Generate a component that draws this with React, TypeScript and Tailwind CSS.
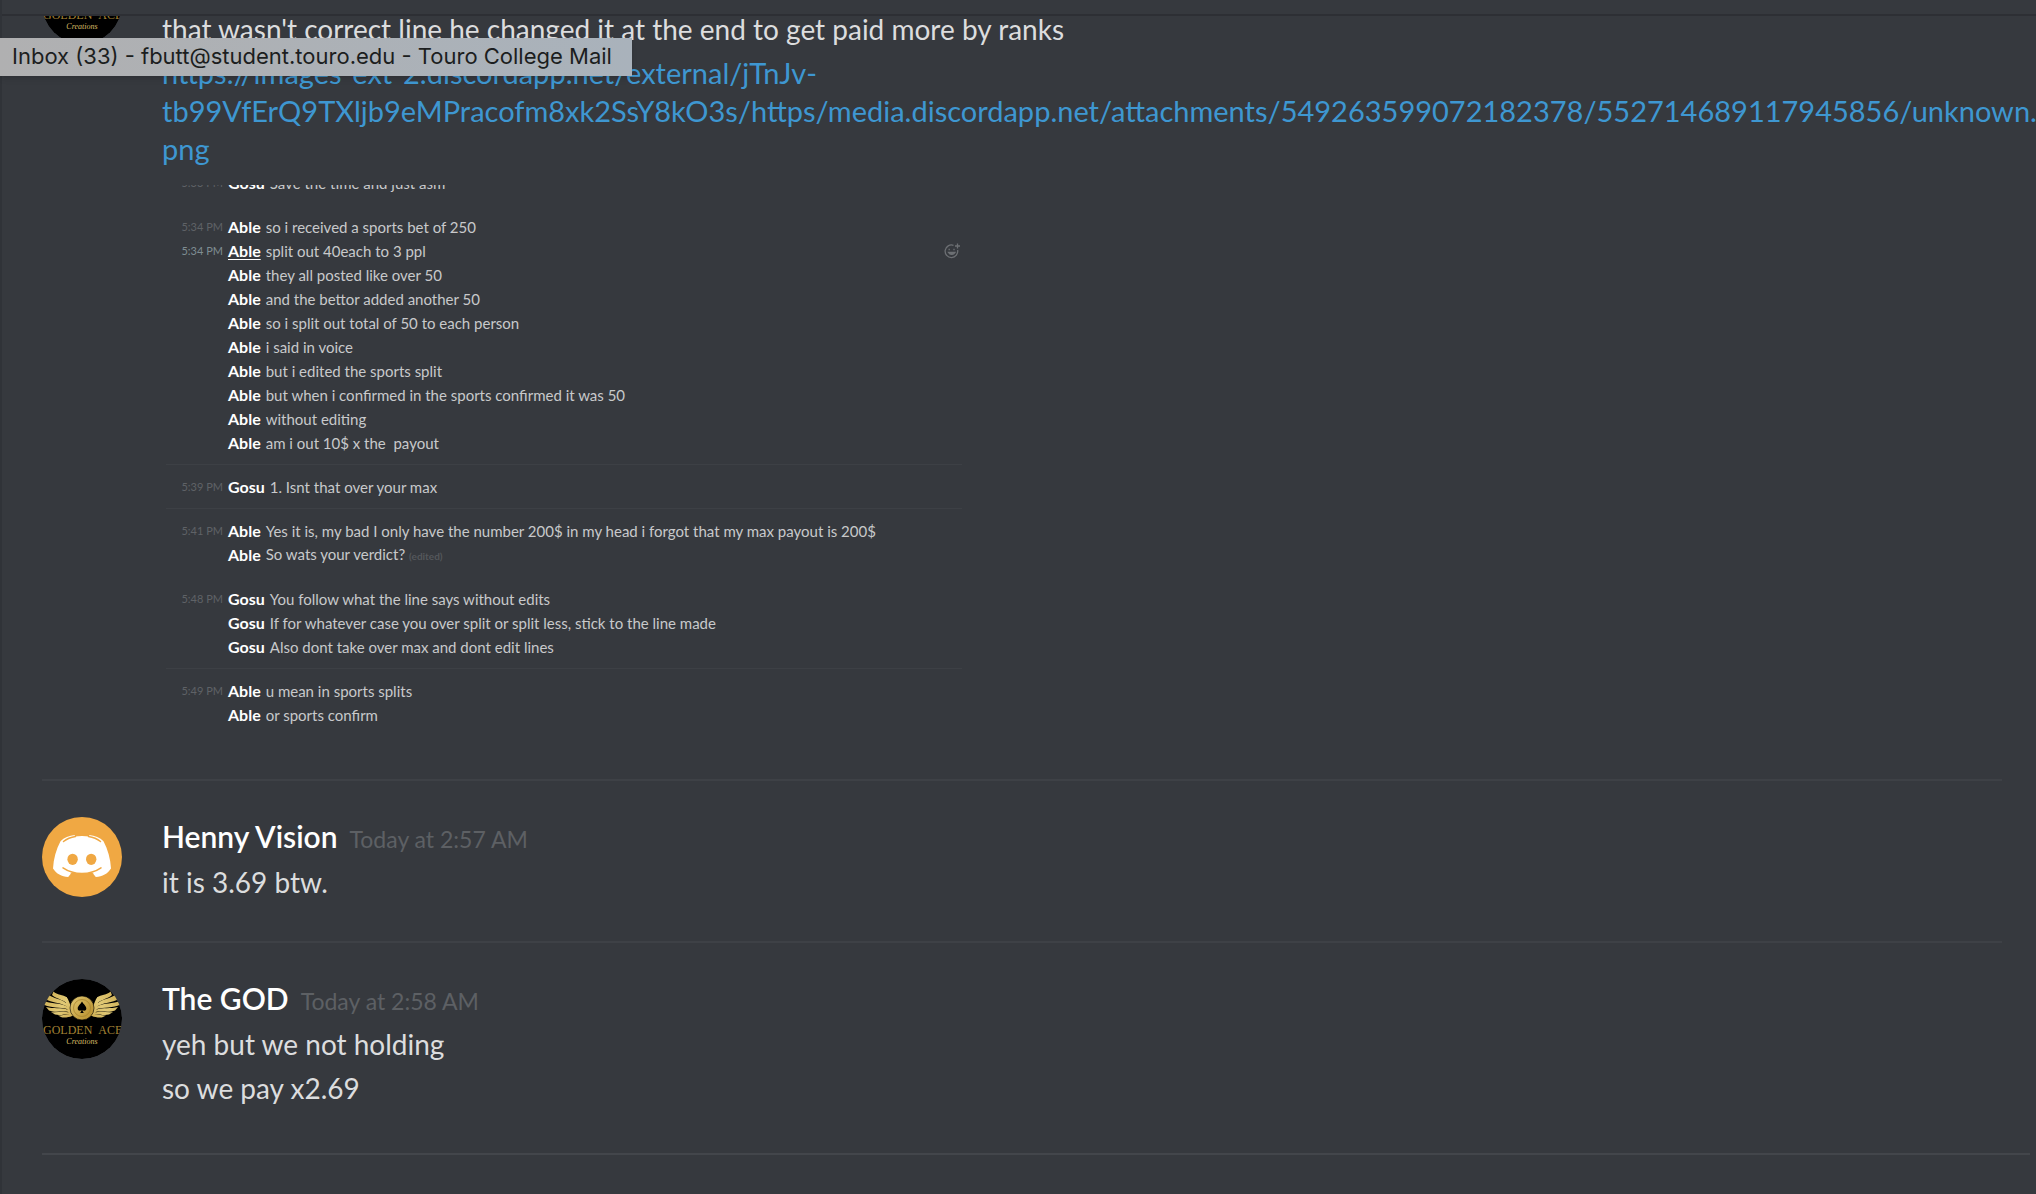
import React from 'react'

interface LogRow {
  time?: string
  active?: boolean
  name: string
  text: string
  edited?: boolean
}

interface LogGroup {
  divided: boolean
  rows: LogRow[]
}

const LOG: LogGroup[] = [
  {
    divided: false,
    rows: [{ time: '5:33 PM', name: 'Gosu', text: 'Save the time and just asm' }],
  },
  {
    divided: false,
    rows: [
      { time: '5:34 PM', name: 'Able', text: 'so i received a sports bet of 250' },
      { time: '5:34 PM', active: true, name: 'Able', text: 'split out 40each to 3 ppl' },
      { name: 'Able', text: 'they all posted like over 50' },
      { name: 'Able', text: 'and the bettor added another 50' },
      { name: 'Able', text: 'so i split out total of 50 to each person' },
      { name: 'Able', text: 'i said in voice' },
      { name: 'Able', text: 'but i edited the sports split' },
      { name: 'Able', text: 'but when i confirmed in the sports confirmed it was 50' },
      { name: 'Able', text: 'without editing' },
      { name: 'Able', text: 'am i out 10$ x the  payout' },
    ],
  },
  {
    divided: true,
    rows: [{ time: '5:39 PM', name: 'Gosu', text: '1. Isnt that over your max' }],
  },
  {
    divided: true,
    rows: [
      {
        time: '5:41 PM',
        name: 'Able',
        text: 'Yes it is, my bad I only have the number 200$ in my head i forgot that my max payout is 200$',
      },
      { name: 'Able', text: 'So wats your verdict?', edited: true },
    ],
  },
  {
    divided: false,
    rows: [
      { time: '5:48 PM', name: 'Gosu', text: 'You follow what the line says without edits' },
      { name: 'Gosu', text: 'If for whatever case you over split or split less, stick to the line made' },
      { name: 'Gosu', text: 'Also dont take over max and dont edit lines' },
    ],
  },
  {
    divided: true,
    rows: [
      { time: '5:49 PM', name: 'Able', text: 'u mean in sports splits' },
      { name: 'Able', text: 'or sports confirm' },
    ],
  },
]

const LINK_LINES = [
  'https://images-ext-2.discordapp.net/external/jTnJv-',
  'tb99VfErQ9TXljb9eMPracofm8xk2SsY8kO3s/https/media.discordapp.net/attachments/549263599072182378/552714689117945856/unknown.',
  'png',
]

function DiscordAvatar() {
  return (
    <svg viewBox="0 0 80 80" className="size-20 shrink-0" aria-hidden="true">
      <circle cx="40" cy="40" r="40" fill="#f0a843" />
      <path
        fill="#fff"
        d="M18.5 24.2C22 20.8 27 18.4 33 18l-.6 1.6c5-.8 10.200-.8 15.200 0L47 18c6 .4 11 2.800 14.500 6.200 4.300 8.200 7 17.300 7.500 27.300-3.300 5.300-8.600 8-15.200 8.500l-3.600-4.600c-6.700 1.500-13.700 1.500-20.400 0L26.200 60C19.600 59.500 14.300 56.800 11 51.500c.5-10 3.200-19.100 7.500-27.300z"
      />
      <g fill="none" stroke="#f0a843" strokeWidth="1.500" strokeLinecap="round">
        <path d="M21.500 24.500c3.500-2.800 7.500-4.300 12-5" />
        <path d="M58.500 24.500c-3.500-2.800-7.500-4.300-12-5" />
        <path d="M21 50.800c11 7.500 27 7.500 38 0" />
      </g>
      <path fill="#f0a843" d="M28.500 56.200c7.500 1.800 15.500 1.800 23 0l-2 4h-19z" />
      <ellipse cx="30.600" cy="42.300" rx="5.200" ry="5.600" fill="#f0a843" />
      <ellipse cx="49.200" cy="42.300" rx="5.200" ry="5.600" fill="#f0a843" />
    </svg>
  )
}

// Left wing, one path per feather; the right one is its mirror
const FEATHERS = [
  'M11.500 12.500C15 16 21 15.500 25 18.500V24c-6-4-11-4.500-15-8z',
  'M7 16c5 4 13 3.500 18 9l1 3c-8-5-16-4-23-8z',
  'M1 21.500c8 4 17 1.500 25 6.500l.5 2.500c-8.500-3-17.500-1-25-5z',
  'M4 28c7 2 15 0 22.500 3l.5 2c-7-1.500-14 1-20-1.500z',
  'M9 33c6 1 12-1.500 18 .5l1 1.500c-5-.5-9 2-15 .5z',
  'M16 36.500c4 .5 8-1.500 12-1.500l2 2c-3 1.500-9 2-11 1z',
  'M24 17.800c3 2.200 3 7.200 6 10.200l1 9h-3c-3-5-4-12-5-17z',
]

function GoldenAvatar({ id }: { id: string }) {
  return (
    <svg viewBox="0 0 80 80" className="size-20 shrink-0" aria-hidden="true">
      <defs>
        <linearGradient id={`${id}-gold`} gradientUnits="userSpaceOnUse" x1="0" y1="12" x2="40" y2="42">
          <stop offset="0" stopColor="#c9a84c" />
          <stop offset="0.5" stopColor="#e2ca76" />
          <stop offset="1" stopColor="#c09a3a" />
        </linearGradient>
        <clipPath id={`${id}-clip`}>
          <circle cx="40" cy="40" r="40" />
        </clipPath>
      </defs>
      <g clipPath={`url(#${id}-clip)`}>
        <circle cx="40" cy="40" r="40" fill="#000" />
        {['matrix(1 0 0 1 0 0)', 'matrix(-1 0 0 1 80 0)'].map((side) => (
          <g key={side} transform={side} fill={`url(#${id}-gold)`}>
            {FEATHERS.map((d) => (
              <path key={d} d={d} />
            ))}
          </g>
        ))}
        <circle cx="40" cy="29" r="12" fill={`url(#${id}-gold)`} stroke="#000" strokeWidth="0.600" />
        <circle cx="40" cy="29" r="8.500" fill="none" stroke="#a88530" strokeWidth="0.800" />
        <path
          fill="#000"
          d="M40 22.500c1.500 3 4.300 4.300 4.300 7 0 2.300-2.700 3-3.800 1.300.1 1.300.5 2.300 1.300 3.200h-3.600c.8-.9 1.200-1.900 1.300-3.200-1.100 1.700-3.800 1-3.800-1.300 0-2.700 2.800-4 4.300-7z"
        />
        <text x="1" y="55" fontFamily="Liberation Serif, serif" fontSize="12" fill="#a38234">
          GOLDEN{'\u00a0\u00a0'}ACE
        </text>
        <text
          x="40"
          y="65"
          textAnchor="middle"
          fontFamily="Liberation Serif, serif"
          fontStyle="italic"
          fontSize="8"
          fill="#d8bc66"
        >
          Creations
        </text>
      </g>
    </svg>
  )
}

function AddReaction() {
  return (
    <button type="button" aria-label="Add reaction" className="mr-[2px] size-4 shrink-0 text-[#6d7074]">
      <svg viewBox="0 0 16 16" fill="none" stroke="currentColor" strokeWidth="1.300">
        <path d="M9.500 2.300A6.300 6.300 0 1 0 13.600 7" />
        <path d="M13.500.5v5M11 3h5" />
        <path d="M4.500 9.500c1.500 2.500 5 2.500 6.500 0z" fill="currentColor" />
        <path d="M5.200 5.800v1.400M10 5.800v1.400" />
      </svg>
    </button>
  )
}

function ChatLog() {
  return (
    <figure className="mt-[17px] max-w-[800px] overflow-hidden pb-6 text-[15px] leading-6">
      <div className="-mt-[25px] pl-1">
        {LOG.map((group, i) => (
          <div
            key={i}
            className={`border-t pt-[10px] pb-[9px] ${group.divided ? 'border-[#3d4045]' : 'border-transparent'}`}
          >
            {group.rows.map((row) => (
              <div key={row.text} className="flex h-6 items-center whitespace-pre">
                <span
                  className={`w-[57px] shrink-0 text-right text-[11px] ${row.active ? 'text-[#7f8d92]' : 'text-[#5f6266]'}`}
                >
                  {row.time}
                </span>
                <strong
                  className={`ml-[5px] text-[16px] font-bold text-white ${row.active ? 'underline underline-offset-2' : ''}`}
                >
                  {row.name}
                </strong>
                <span className="ml-[5px] grow text-[#c8c9cb]">
                  {row.text}
                  {row.edited && <small className="ml-1 text-[10px] font-bold text-[#54575b]">(edited)</small>}
                </span>
                {row.active && <AddReaction />}
              </div>
            ))}
          </div>
        ))}
      </div>
    </figure>
  )
}

interface MessageProps {
  avatar: React.ReactNode
  author: string
  time: string
  children: React.ReactNode
}

function Message({ avatar, author, time, children }: MessageProps) {
  return (
    <article className="flex gap-10">
      {avatar}
      <div className="min-w-0 flex-1">
        <h2 className="flex items-baseline gap-3 text-[30px] leading-[38px] text-white">
          <span className="font-semibold">{author}</span>
          <time className="text-[23px] text-[#5d6064]">{time}</time>
        </h2>
        <div className="flex flex-col gap-[6px] pt-[5px]">{children}</div>
      </div>
    </article>
  )
}

export default function App() {
  return (
    <div className="flex min-h-screen flex-col overflow-hidden border-l-2 border-[#303338] bg-[#36393e] font-['Lato',sans-serif] text-[28px] leading-[38px] text-[#dcddde]">
      <header className="z-10 h-4 shrink-0 border-b-2 border-[#2d2f34] bg-[#36393e]" />

      <main className="pl-10">
        <section className="mr-[34px] border-b-2 border-[#3e4146] pb-[19px]">
          <div className="-mt-[52px] flex gap-10">
            <GoldenAvatar id="top" />
            <div className="min-w-0 flex-1 pt-[46px]">
              <p>that wasn't correct line he changed it at the end to get paid more by ranks</p>
              <p className="mt-[6px] text-[29px] whitespace-nowrap">
                <a href="#attachment" className="text-[#3e97d1]">
                  {LINK_LINES.map((line) => (
                    <span key={line} className="block">
                      {line}
                    </span>
                  ))}
                </a>
              </p>
              <ChatLog />
            </div>
          </div>
        </section>

        <section className="mr-[34px] border-b-2 border-[#3e4146] pt-9 pb-10">
          <Message avatar={<DiscordAvatar />} author="Henny Vision" time="Today at 2:57 AM">
            <p>it is 3.69 btw.</p>
          </Message>
        </section>

        <section className="mr-[6px] border-b-2 border-[#43464b] pt-9 pb-[46px]">
          <Message avatar={<GoldenAvatar id="bottom" />} author="The GOD" time="Today at 2:58 AM">
            <p>yeh but we not holding</p>
            <p>so we pay x2.69</p>
          </Message>
        </section>
      </main>

      {/* Browser tab tooltip hanging over the chat */}
      <div
        role="tooltip"
        className="absolute top-[38px] left-0 z-20 bg-linear-to-r from-[#b0b0b1] to-[#a9b2bb] pr-5 pb-[2px] pl-3 font-['Inter',sans-serif] text-[22px] leading-[36px] whitespace-nowrap text-[#1c1e20] shadow-md"
      >
        Inbox (33) - fbutt@student.touro.edu - Touro College Mail
      </div>
    </div>
  )
}
